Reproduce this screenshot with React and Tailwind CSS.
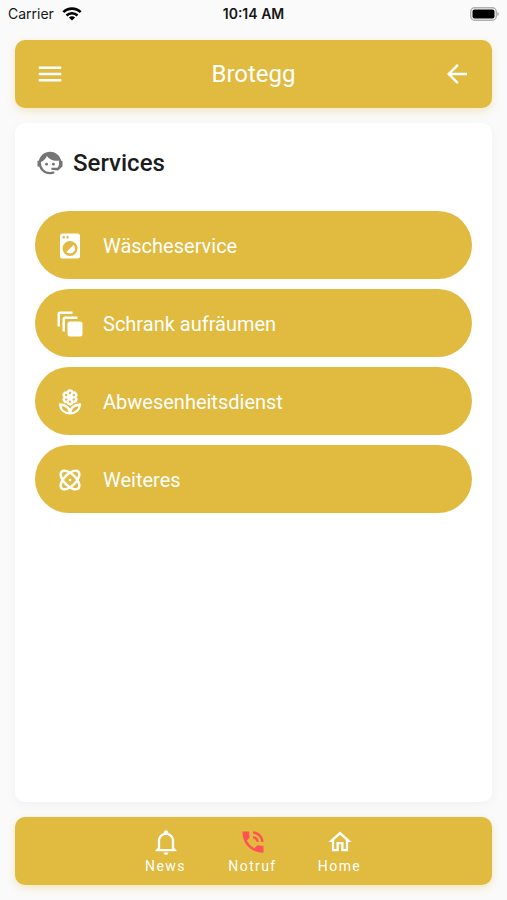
import { MdArrowBack, MdMenu } from 'react-icons/md';

const Svg = ({ size = 30, className = '', children }) => (
  <svg width={size} height={size} viewBox="0 0 24 24" fill="currentColor" className={`shrink-0 ${className}`} aria-hidden="true">
    {children}
  </svg>
);

const AgentIcon = () => (
  <Svg>
    <path d="M18.72,14.76C19.07,13.91 19.26,13 19.26,12C19.26,11.28 19.15,10.59 18.96,9.95C18.31,10.1 17.63,10.18 16.92,10.18C13.86,10.18 11.15,8.67 9.5,6.34C8.61,8.5 6.91,10.26 4.77,11.22C4.73,11.47 4.73,11.74 4.73,12A7.27,7.27 0 0,0 12,19.27C13.05,19.27 14.06,19.04 14.97,18.63C15.54,19.72 15.8,20.26 15.78,20.26C14.14,20.81 12.87,21.08 12,21.08C9.58,21.08 7.27,20.13 5.57,18.42C4.53,17.38 3.76,16.11 3.33,14.73H2V10.18H3.09C3.93,6.04 7.6,2.92 12,2.92C14.4,2.92 16.71,3.87 18.42,5.58C19.69,6.84 20.54,8.45 20.89,10.18H22V14.73H21.94L18.38,18L13.08,17.4V15.73H17.91L18.72,14.76Z" />
    <circle cx="9.27" cy="12.91" r="1.14" />
    <circle cx="14.72" cy="12.91" r="1.14" />
  </Svg>
);

const WashingMachineIcon = () => (
  <Svg>
    <path d="M14.83,11.17C16.39,12.73 16.39,15.27 14.83,16.83C13.27,18.39 10.73,18.39 9.17,16.83L14.83,11.17M6,2H18A2,2 0 0,1 20,4V20A2,2 0 0,1 18,22H6A2,2 0 0,1 4,20V4A2,2 0 0,1 6,2M7,4A1,1 0 0,0 6,5A1,1 0 0,0 7,6A1,1 0 0,0 8,5A1,1 0 0,0 7,4M10,4A1,1 0 0,0 9,5A1,1 0 0,0 10,6A1,1 0 0,0 11,5A1,1 0 0,0 10,4M12,8A6,6 0 0,0 6,14A6,6 0 0,0 12,20A6,6 0 0,0 18,14A6,6 0 0,0 12,8Z" />
  </Svg>
);

const StackIcon = () => (
  <Svg>
    <path d="M4 2h10v2H4v10H2V4a2 2 0 0 1 2-2Z" />
    <path d="M8 6h10v2H8v10H6V8a2 2 0 0 1 2-2Z" />
    <rect x="10" y="10" width="12" height="12" rx="2" />
  </Svg>
);

const PETALS = [0, 60, 120, 180, 240, 300];

const FlowerIcon = () => (
  <Svg>
    {PETALS.map((angle) => (
      <circle key={angle} cx="12" cy="4.4" r="2.7" transform={`rotate(${angle} 12 8.2)`} />
    ))}
    <circle cx="12" cy="8.2" r="4" />
    {PETALS.map((angle) => (
      <circle key={angle} cx="12" cy="4.7" r="0.95" fill="#e1ba40" transform={`rotate(${angle} 12 8.2)`} />
    ))}
    <path
      d="M12 21.1C12 17.2 8.9 14.2 4 14C4.4 18.2 7.5 21.1 12 21.1ZM12 21.1C12 17.2 15.1 14.2 20 14C19.6 18.2 16.5 21.1 12 21.1Z"
      fill="none"
      stroke="currentColor"
      strokeWidth="1.9"
      strokeLinejoin="round"
    />
  </Svg>
);

const AtomIcon = () => (
  <Svg>
    <g fill="none" stroke="currentColor" strokeWidth="2">
      <ellipse cx="12" cy="12" rx="9.4" ry="4.7" transform="rotate(45 12 12)" />
      <ellipse cx="12" cy="12" rx="9.4" ry="4.7" transform="rotate(-45 12 12)" />
    </g>
    <circle cx="12" cy="12" r="1.1" />
  </Svg>
);

const BellIcon = () => (
  <Svg size={28}>
    <path d="M10 21H14C14 22.1 13.1 23 12 23S10 22.1 10 21M21 19V20H3V19L5 17V11C5 7.9 7 5.2 10 4.3V4C10 2.9 10.9 2 12 2S14 2.9 14 4V4.3C17 5.2 19 7.9 19 11V17L21 19M17 11C17 8.2 14.8 6 12 6S7 8.2 7 11V18H17V11Z" />
  </Svg>
);

const PhoneIcon = () => (
  <Svg size={28} className="text-[#ff5252]">
    <path d="M15 12h2c0-2.76-2.24-5-5-5v2c1.66 0 3 1.34 3 3zm4 0h2c0-4.97-4.03-9-9-9v2c3.87 0 7 3.13 7 7zm2 3.46-5.27-.61-2.52 2.52c-2.83-1.44-5.15-3.75-6.59-6.59l2.53-2.53L8.54 3H3.03C2.45 13.18 10.82 21.55 21 20.97v-5.51z" />
  </Svg>
);

const HomeIcon = () => (
  <Svg size={28}>
    <path d="M12 5.69L17 10.19V18H15V12H9V18H7V10.19L12 5.69M12 3L2 12H5V20H11V14H13V20H19V12H22L12 3Z" />
  </Svg>
);

const services = [
  { label: 'Wäscheservice', Icon: WashingMachineIcon },
  { label: 'Schrank aufräumen', Icon: StackIcon },
  { label: 'Abwesenheitsdienst', Icon: FlowerIcon },
  { label: 'Weiteres', Icon: AtomIcon },
];

function StatusBar() {
  return (
    <div className="grid h-7 grid-cols-3 items-center px-2 font-['Inter',sans-serif] text-sm text-[#161616]">
      <div className="flex items-center gap-2">
        <span>Carrier</span>
        <svg width="20" height="14" viewBox="0 0 20 14" aria-hidden="true">
          <g fill="none" stroke="#000" strokeWidth="2.6">
            <path d="M1.3 5.2a12.3 12.3 0 0 1 17.4 0" />
            <path d="M4.5 8.5a7.8 7.8 0 0 1 11 0" />
          </g>
          <path d="M10 13.6 6.9 10.5a4.4 4.4 0 0 1 6.2 0Z" />
        </svg>
      </div>
      <span className="text-center font-semibold">10:14 AM</span>
      <svg width="30" height="15" viewBox="0 0 30 15" className="justify-self-end" aria-hidden="true">
        <rect x="1.7" y="0.7" width="25.6" height="12.6" rx="4" fill="#fafafa" stroke="#b0b0b0" strokeWidth="1.4" />
        <rect x="3.5" y="2.5" width="22" height="9" rx="2" />
        <path d="M28.3 5v4q1.6-.7 1.6-2t-1.6-2Z" fill="#a8a8a8" />
      </svg>
    </div>
  );
}

function NavButton({ label, children }) {
  return (
    <button type="button" className="flex w-[87px] flex-col items-center text-sm leading-5 tracking-widest">
      {children}
      {label}
    </button>
  );
}

export default function App() {
  return (
    <div className="flex min-h-screen flex-col bg-[#fafafa] pb-[15px] font-['Roboto',sans-serif] text-white">
      <StatusBar />

      <header className="mx-[15px] mt-3 flex h-[68px] items-center justify-between rounded-[10px] bg-[#e1ba40] px-5 shadow-[0_3px_8px_rgba(225,186,64,0.3)]">
        <button type="button" aria-label="Menu"><MdMenu size={30} /></button>
        <h1 className="text-2xl">Brotegg</h1>
        <button type="button" aria-label="Back"><MdArrowBack size={30} /></button>
      </header>

      <main className="mx-[15px] my-[15px] flex-1 rounded-[10px] bg-white px-5 pt-6 shadow-[0_3px_12px_rgba(0,0,0,0.04)]">
        <div className="flex h-8 items-center gap-2 text-[#757575]">
          <AgentIcon />
          <h2 className="text-2xl font-medium text-[#1c1c1c]">Services</h2>
        </div>
        <ul className="mt-8 flex flex-col gap-2.5">
          {services.map(({ label, Icon }) => (
            <li key={label}>
              <button type="button" className="flex h-[68px] w-full items-center gap-[18px] rounded-full bg-[#e1ba40] px-5 pt-px text-xl">
                <Icon />
                {label}
              </button>
            </li>
          ))}
        </ul>
      </main>

      <nav className="mx-[15px] flex h-[68px] items-center justify-center rounded-[10px] bg-[#e1ba40] pt-0.5 pr-0.5 shadow-[0_3px_8px_rgba(225,186,64,0.3)]">
        <NavButton label="News"><BellIcon /></NavButton>
        <NavButton label="Notruf"><PhoneIcon /></NavButton>
        <NavButton label="Home"><HomeIcon /></NavButton>
      </nav>
    </div>
  );
}
